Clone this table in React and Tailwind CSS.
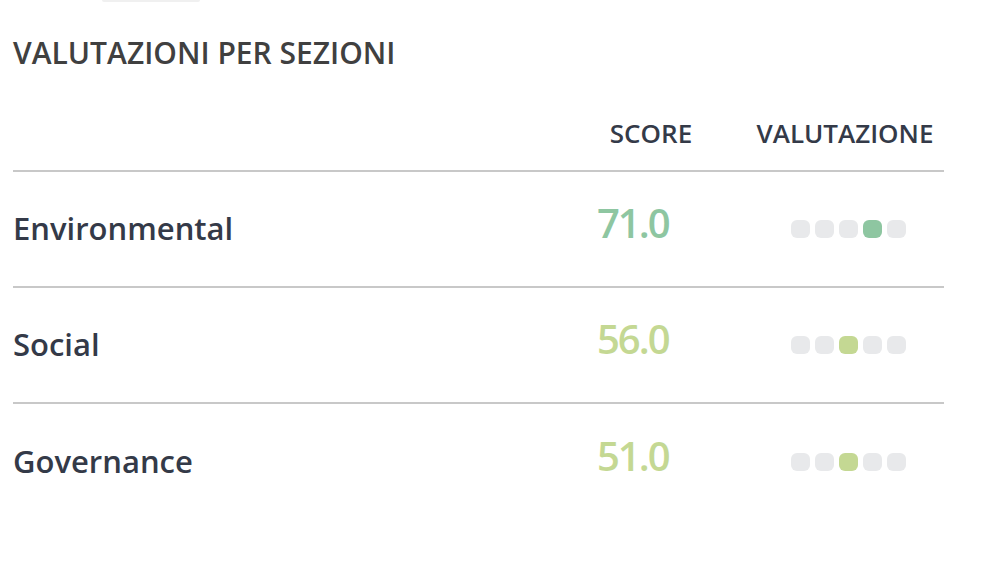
// App.jsx
const rows = [
  { name: 'Environmental', score: '71.0', level: 4, color: 'green' },
  { name: 'Social', score: '56.0', level: 3, color: 'lime' },
  { name: 'Governance', score: '51.0', level: 3, color: 'lime' },
];

function Dots({ level, color }) {
  return (
    <div className="flex items-center justify-center gap-[5px]">
      {[1, 2, 3, 4, 5].map((i) => (
        <span
          key={i}
          className={
            'block w-[19px] h-[18px] rounded-[6px] ' +
            (i === level ? (color === 'green' ? 'bg-[#8ec6a1]' : 'bg-[#c4d893]') : 'bg-[#e8e9eb]')
          }
        />
      ))}
    </div>
  );
}

export default function App() {
  return (
    <div className="w-[998px] h-[562px] bg-white overflow-hidden font-['Open_Sans',sans-serif]">
      <div className="ml-[102px] w-[98px] h-[2px] bg-[#f0f0f0] rounded-b" />

      <div className="px-[13px]">
        <h2 className="mt-[31px] text-[30px] leading-[40px] font-semibold text-[#404040]">
          VALUTAZIONI PER SEZIONI
        </h2>

        <div className="w-[931px] mt-[45px]">
          <div className="grid grid-cols-[567px_140px_1fr] border-b-2 border-[#c8c8c8] pb-[22px] text-[26px] leading-[30px] font-semibold text-[#343a48]">
            <div />
            <div className="text-center pl-[2px]">SCORE</div>
            <div className="text-center pl-[26px]">VALUTAZIONE</div>
          </div>

          {rows.map((r, idx) => (
            <div
              key={r.name}
              className={
                'grid grid-cols-[567px_140px_1fr] items-center h-[116px] ' +
                (idx < rows.length - 1 ? 'border-b-2 border-[#c8c8c8]' : '')
              }
            >
              <div className="text-[31px] leading-[40px] font-semibold text-[#343a48] mt-[-2px]">{r.name}</div>
              <div
                className={
                  'pl-[17px] mb-[12px] text-[40px] leading-[48px] font-semibold tracking-[-0.05em] ' +
                  (r.color === 'green' ? 'text-[#8ec6a1]' : 'text-[#c4d893]')
                }
              >
                {r.score}
              </div>
              <div className="pl-[28px]">
                <div className="ml-[5px]">
                  <Dots level={r.level} color={r.color} />
                </div>
              </div>
            </div>
          ))}
        </div>
      </div>
    </div>
  );
}
